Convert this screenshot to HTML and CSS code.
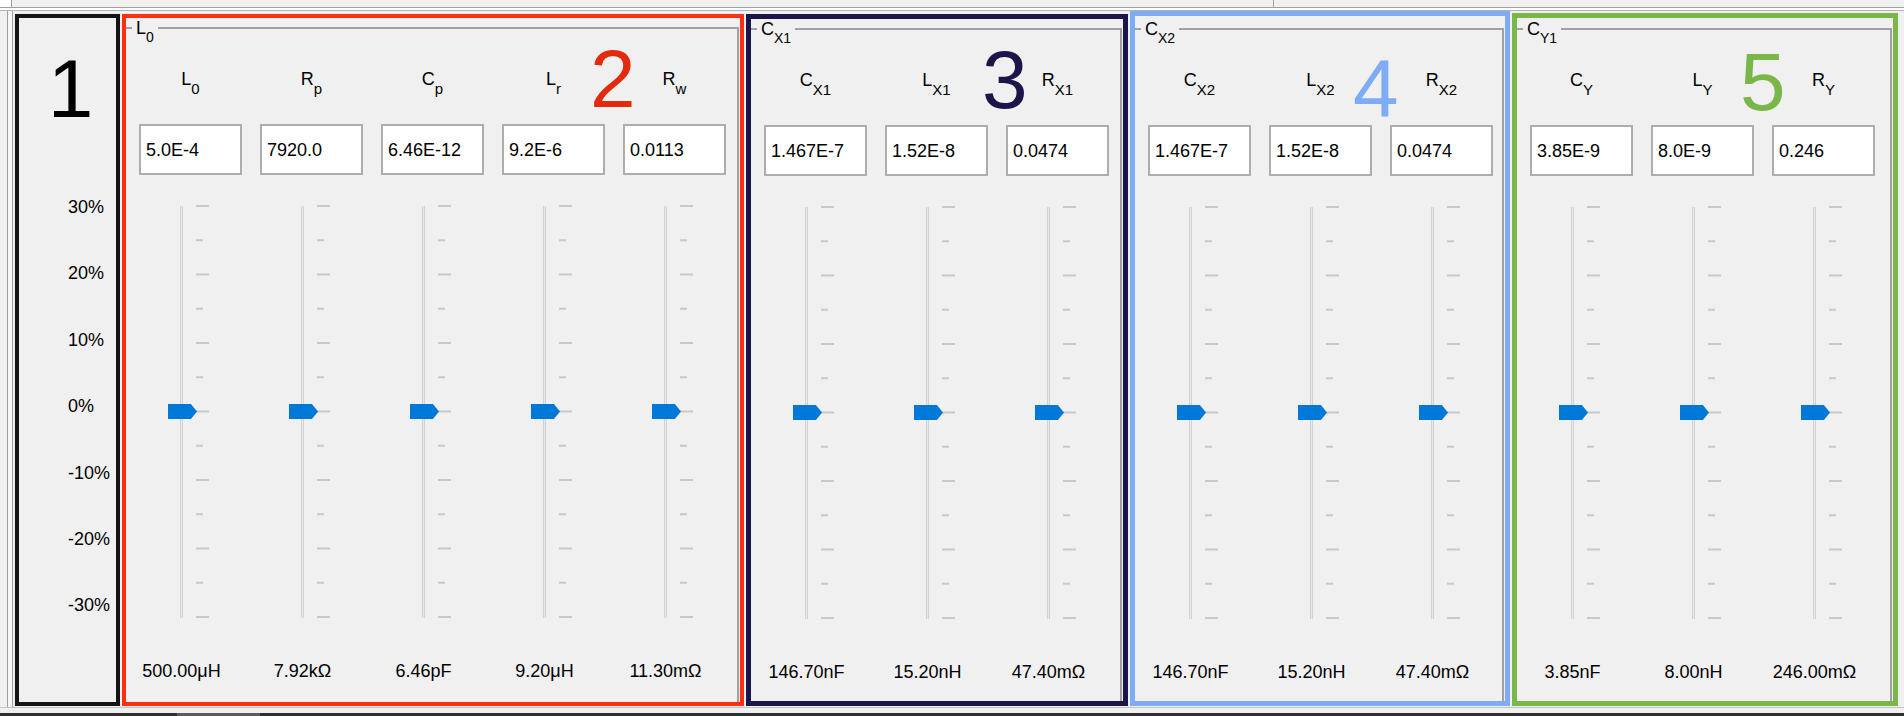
FILE: index.html
```html
<!DOCTYPE html>
<html>
<head>
<meta charset="utf-8">
<title>Parameters</title>
<link rel="stylesheet" href="styles.css">
</head>
<body>
<div class="topbar"><div class="tb-corner"></div><div class="tb-left"></div><div class="tb-split"></div><div class="tb-right"></div></div>
<div class="rule"></div>
<div class="main">
  <div class="side"></div>
  <div class="boxes">
    <div class="box box-scale">
      <div class="scale-num">1</div>
      <div class="pct">
        <div class="pct-item">30%</div>
        <div class="pct-item">20%</div>
        <div class="pct-item">10%</div>
        <div class="pct-item">0%</div>
        <div class="pct-item">-10%</div>
        <div class="pct-item">-20%</div>
        <div class="pct-item">-30%</div>
      </div>
    </div>

    <div class="box box-red">
      <fieldset class="group">
        <legend>L<span class="sub">0</span></legend>
        <div class="cols">
          <div class="col"><div class="label">L<span class="sub">0</span></div><div class="field">5.0E-4</div><div class="slider"><div class="track"></div><div class="ticks"></div><div class="thumb"></div></div><div class="value">500.00μH</div></div>
          <div class="col"><div class="label">R<span class="sub">p</span></div><div class="field">7920.0</div><div class="slider"><div class="track"></div><div class="ticks"></div><div class="thumb"></div></div><div class="value">7.92kΩ</div></div>
          <div class="col"><div class="label">C<span class="sub">p</span></div><div class="field">6.46E-12</div><div class="slider"><div class="track"></div><div class="ticks"></div><div class="thumb"></div></div><div class="value">6.46pF</div></div>
          <div class="col"><div class="label">L<span class="sub">r</span></div><div class="field">9.2E-6</div><div class="slider"><div class="track"></div><div class="ticks"></div><div class="thumb"></div></div><div class="value">9.20μH</div></div>
          <div class="col"><div class="label">R<span class="sub">w</span></div><div class="field">0.0113</div><div class="slider"><div class="track"></div><div class="ticks"></div><div class="thumb"></div></div><div class="value">11.30mΩ</div></div>
        </div>
      </fieldset>
      <div class="mark mark-2">2</div>
    </div>

    <div class="box box-navy">
      <fieldset class="group">
        <legend>C<span class="sub">X1</span></legend>
        <div class="cols">
          <div class="col"><div class="label">C<span class="sub">X1</span></div><div class="field">1.467E-7</div><div class="slider"><div class="track"></div><div class="ticks"></div><div class="thumb"></div></div><div class="value">146.70nF</div></div>
          <div class="col"><div class="label">L<span class="sub">X1</span></div><div class="field">1.52E-8</div><div class="slider"><div class="track"></div><div class="ticks"></div><div class="thumb"></div></div><div class="value">15.20nH</div></div>
          <div class="col"><div class="label">R<span class="sub">X1</span></div><div class="field">0.0474</div><div class="slider"><div class="track"></div><div class="ticks"></div><div class="thumb"></div></div><div class="value">47.40mΩ</div></div>
        </div>
      </fieldset>
      <div class="mark mark-3">3</div>
    </div>

    <div class="box box-blue">
      <fieldset class="group">
        <legend>C<span class="sub">X2</span></legend>
        <div class="cols">
          <div class="col"><div class="label">C<span class="sub">X2</span></div><div class="field">1.467E-7</div><div class="slider"><div class="track"></div><div class="ticks"></div><div class="thumb"></div></div><div class="value">146.70nF</div></div>
          <div class="col"><div class="label">L<span class="sub">X2</span></div><div class="field">1.52E-8</div><div class="slider"><div class="track"></div><div class="ticks"></div><div class="thumb"></div></div><div class="value">15.20nH</div></div>
          <div class="col"><div class="label">R<span class="sub">X2</span></div><div class="field">0.0474</div><div class="slider"><div class="track"></div><div class="ticks"></div><div class="thumb"></div></div><div class="value">47.40mΩ</div></div>
        </div>
      </fieldset>
      <div class="mark mark-4">4</div>
    </div>

    <div class="box box-green">
      <fieldset class="group">
        <legend>C<span class="sub">Y1</span></legend>
        <div class="cols">
          <div class="col"><div class="label">C<span class="sub">Y</span></div><div class="field">3.85E-9</div><div class="slider"><div class="track"></div><div class="ticks"></div><div class="thumb"></div></div><div class="value">3.85nF</div></div>
          <div class="col"><div class="label">L<span class="sub">Y</span></div><div class="field">8.0E-9</div><div class="slider"><div class="track"></div><div class="ticks"></div><div class="thumb"></div></div><div class="value">8.00nH</div></div>
          <div class="col"><div class="label">R<span class="sub">Y</span></div><div class="field">0.246</div><div class="slider"><div class="track"></div><div class="ticks"></div><div class="thumb"></div></div><div class="value">246.00mΩ</div></div>
        </div>
      </fieldset>
      <div class="mark mark-5">5</div>
    </div>
  </div>
</div>
<div class="footer"><div class="fb-dark fb-start"></div><div class="fb-thumb"></div><div class="fb-dark fb-rest"></div></div>
</body>
</html>
```

FILE: styles.css
```css
* { box-sizing: border-box; }
html, body { margin: 0; padding: 0; }
body {
  width: 1904px;
  height: 716px;
  overflow: hidden;
  background: #f0f0f0;
  font-family: "Liberation Sans", Arial, sans-serif;
  color: #000;
}

/* window chrome */
.topbar { display: flex; height: 7px; }
.tb-corner { width: 12px; background: #fff; border-right: 1px solid #a0a0a0; }
.tb-left { width: 1261px; }
.tb-split { width: 1px; background: #a0a0a0; }
.tb-right { flex: 1; }
.rule {
  height: 4px;
  border-top: 1px solid #a0a0a0;
  border-bottom: 1px solid #b4b4b4;
  background: #fff;
}
.main { display: flex; height: 696px; }
.side {
  width: 6px;
  margin-left: 7px;
  margin-right: 2px;
  border-left: 1px solid #a0a0a0;
  border-right: 1px solid #a0a0a0;
  background: #f7f7f7;
}
.boxes { display: flex; gap: 2px; padding-top: 3px; }
.footer {
  height: 9px;
  border-top: 1px solid #c4c4c4;
  display: flex;
  align-items: flex-end;
}
.fb-dark, .fb-thumb { height: 3px; }
.fb-dark { background: #2f2f2f; }
.fb-start { width: 177px; }
.fb-thumb { width: 83px; background: #5c5c5c; }
.fb-rest { flex: 1; }

/* annotated boxes */
.box {
  position: relative;
  height: 692px;
  display: flex;
  flex-direction: column;
}
.box-scale { width: 105px; border: 4px solid #141414; }
.box-red { width: 622px; border: 4px solid #ff2e12; }
.box-navy { width: 382px; border: 5px solid #1c154a; }
.box-blue { width: 380px; border: 5px solid #7eabf6; margin-top: -3px; height: 695px; }
.box-green { width: 386px; border: 5px solid #7ab648; margin-top: -1px; height: 693px; }
.box-blue .group { margin-top: 3px; }
.box-green .group { margin-top: 1px; }

.scale-num {
  margin-top: 30px;
  padding-left: 6px;
  font-size: 82px;
  line-height: 82px;
  text-align: center;
}
.pct { margin-top: 67px; padding-left: 49px; }
.pct-item { height: 66.4px; font-size: 18px; line-height: 20px; }

.mark {
  position: absolute;
  font-size: 82px;
  line-height: 82px;
}
.mark-2 { left: 464px; top: 20px; color: #e42a0c; }
.mark-3 { left: 231px; top: 20px; color: #1c154a; }
.mark-4 { left: 218px; top: 32px; color: #7eabf6; }
.mark-5 { left: 223px; top: 23px; color: #7ab648; }

/* group box */
.group {
  flex: 1;
  min-width: 0;
  margin: 0 1px 0 0;
  padding: 0;
  border: 0;
  border-top: 2px solid #a0a0a0;
  border-right: 2px solid #a0a0a0;
}
.group legend {
  margin-left: 6px;
  padding: 0 4px;
  height: 20px;
  font-size: 18px;
  line-height: 20px;
}
.group legend .sub { font-size: 14px; vertical-align: -8px; }
.sub { font-size: 15px; line-height: 0; vertical-align: -9px; }

.cols { display: flex; gap: 18px; padding-left: 13px; }
.col { width: 103px; display: flex; flex-direction: column; }
.label {
  height: 86px;
  padding-top: 31px;
  font-size: 18px;
  line-height: 20px;
  text-align: center;
}
.field {
  height: 51px;
  border: 2px solid #adadad;
  background: #fff;
  padding: 1px 0 0 5px;
  font-size: 18px;
  line-height: 46px;
  white-space: nowrap;
}
.slider {
  position: relative;
  display: flex;
  margin-top: 31px;
  height: 413px;
}
.track {
  margin-left: 41px;
  width: 3px;
  height: 412px;
  border-left: 1px solid #d3d3d3;
  border-right: 1px solid #d3d3d3;
  background: #e8e8e8;
}
.ticks {
  margin-left: 13px;
  margin-top: -1px;
  width: 13px;
  height: 414px;
  background:
    linear-gradient(#c8c8c8 0 2px, transparent 2px) 0 0 / 13px 68.5px repeat-y,
    linear-gradient(#c8c8c8 0 2px, transparent 2px) 0 34.25px / 7px 68.5px repeat-y;
}
.thumb {
  position: absolute;
  left: 29px;
  top: 198px;
  width: 29px;
  height: 15px;
  background: #0078d7;
  clip-path: polygon(0 0, 79% 0, 100% 50%, 79% 100%, 0 100%);
}
.value {
  margin-top: 42px;
  padding-right: 18px;
  text-align: center;
  font-size: 18px;
  line-height: 20px;
  white-space: nowrap;
}
```
